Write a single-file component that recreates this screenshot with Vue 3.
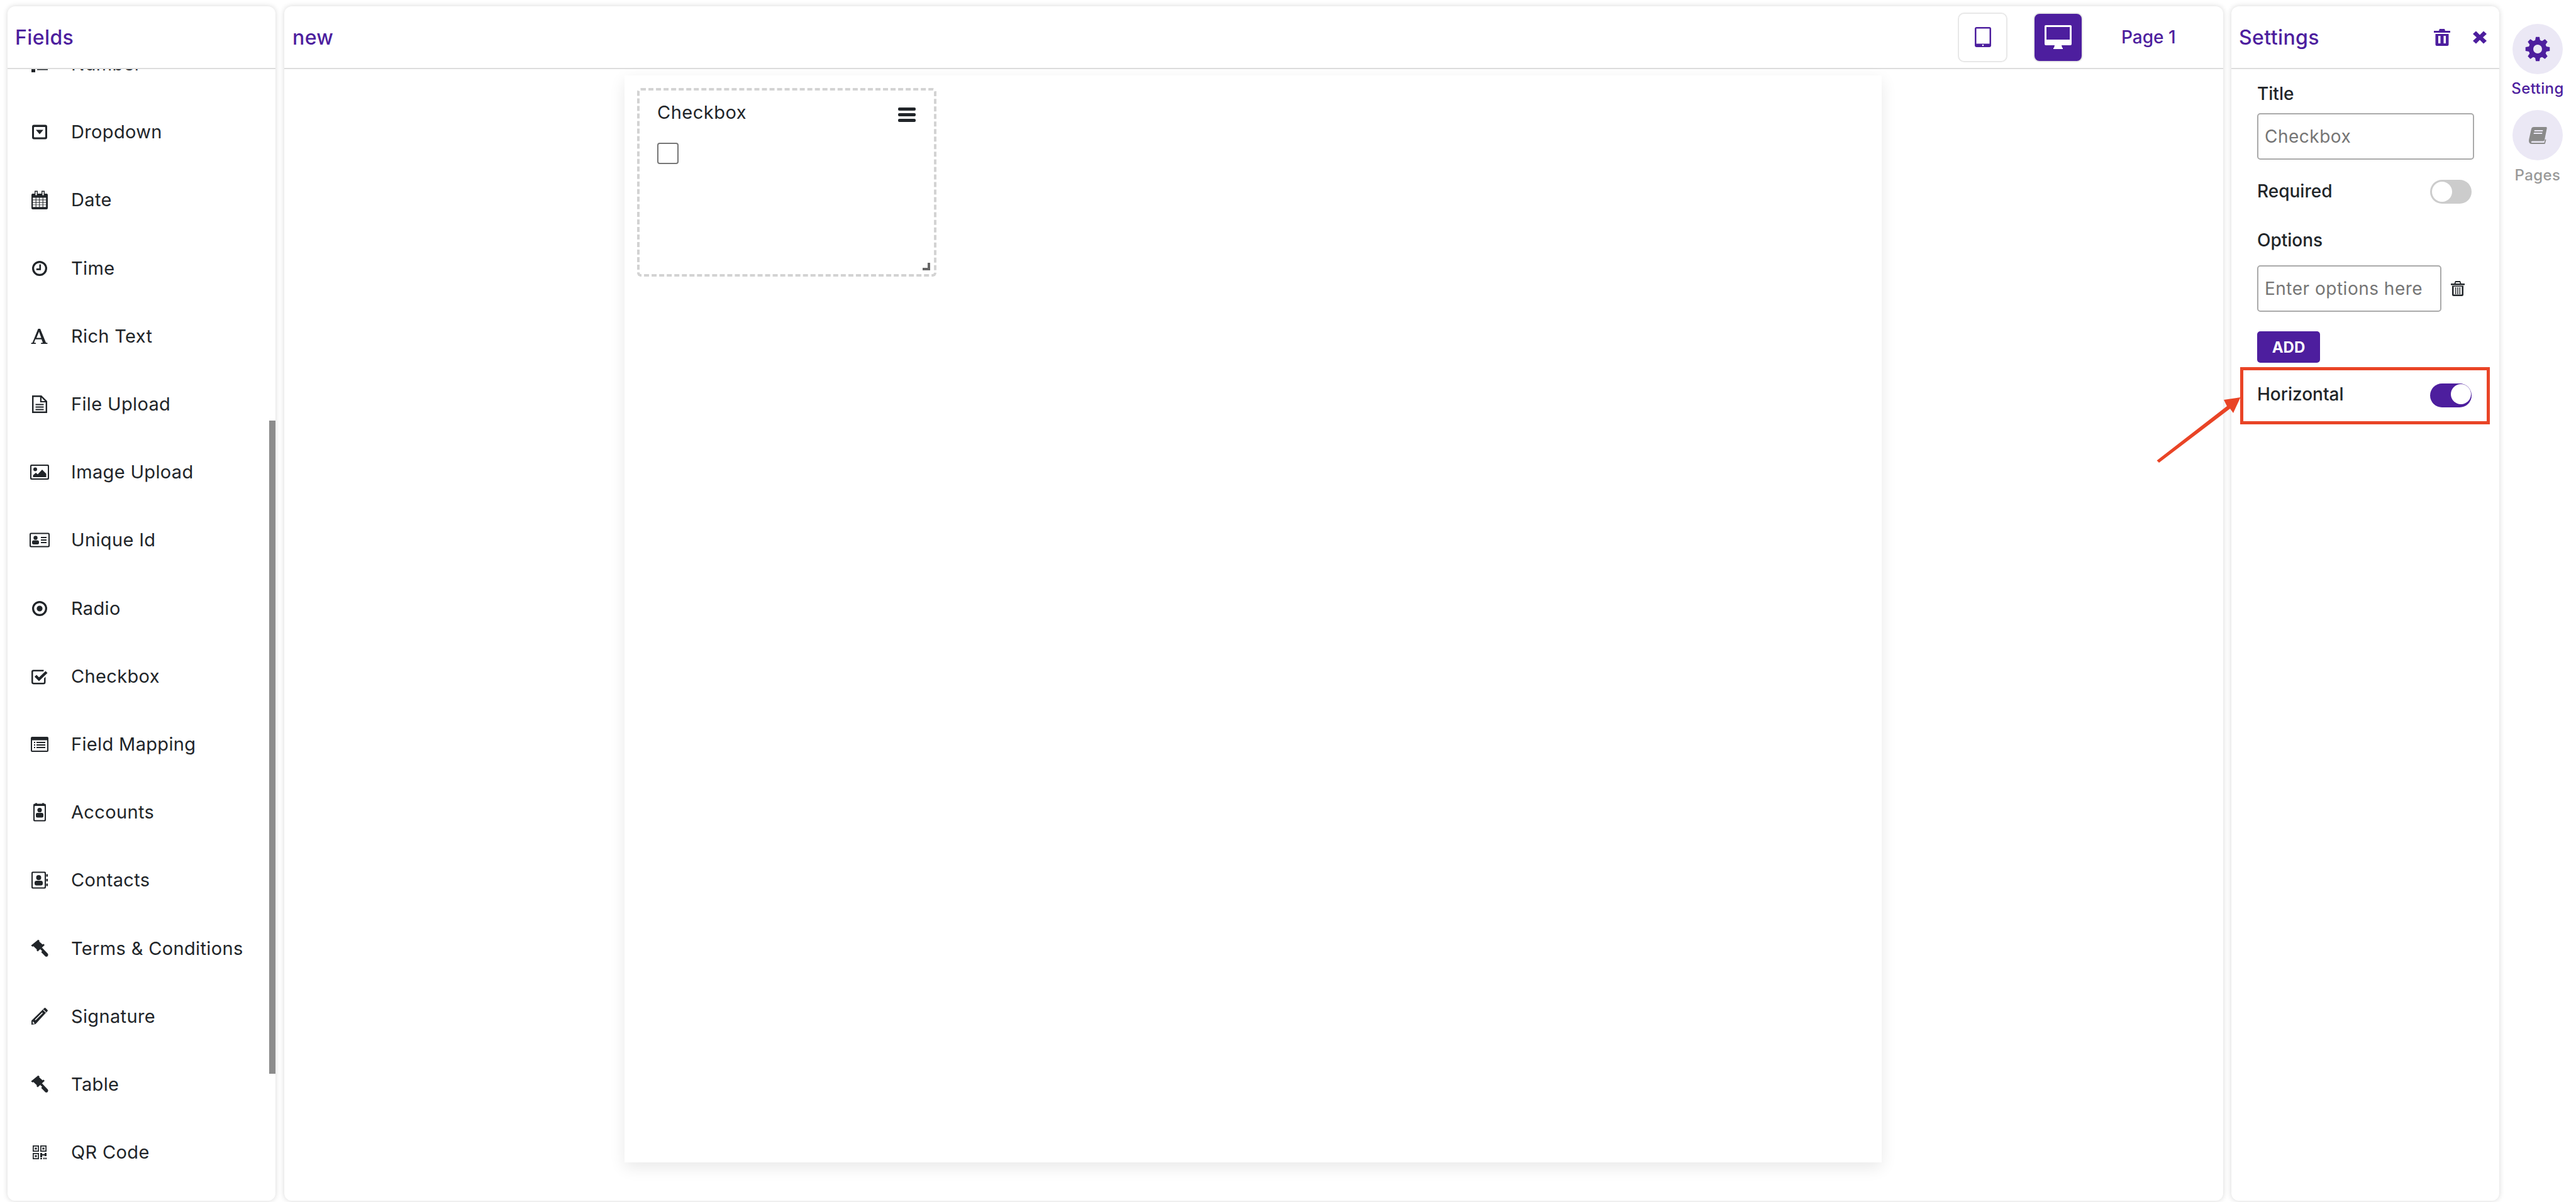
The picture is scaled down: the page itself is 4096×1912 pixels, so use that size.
<script setup>
const rect = (x, y, w, h) => `M${x} ${y}h${w}v${h}h${-w}z`
const rr = (x, y, w, h, r) =>
  `M${x + r} ${y}h${w - 2 * r}a${r} ${r} 0 0 1 ${r} ${r}v${h - 2 * r}a${r} ${r} 0 0 1 ${-r} ${r}h${-(w - 2 * r)}a${r} ${r} 0 0 1 ${-r} ${-r}v${-(h - 2 * r)}a${r} ${r} 0 0 1 ${r} ${-r}z`
const circ = (cx, cy, r) => `M${cx - r} ${cy}a${r} ${r} 0 1 0 ${2 * r} 0a${r} ${r} 0 1 0 ${-2 * r} 0z`

const gavel =
  'M13.7 1.7L16 3.5L15.2 4.6L20.8 9.5L22 8.3L24 10.3L13 20.5L11 18.5L11.8 17.4L6 12L5 13L2.3 11Z M19.7 14.3L29 24Q30.5 26 28.7 28Q26.7 29.7 24.8 28L18.5 21.5L20 19.7L17 16.9Z'

const calCells = []
for (let c = 0; c < 4; c++) for (let r = 0; r < 4; r++) calCells.push(rect(5.2 + c * 5.5, 12.6 + r * 3.9, 4.5, 3))
const calRing = x => rect(x, 1.5, 5, 4.5) + rect(x + 1.4, 3, 2.2, 3) + rect(x + 1.4, 6, 2.2, 2.5)

const qrBox = (x, y) => rect(x, y, 10, 10) + rect(x + 1.7, y + 1.7, 6.6, 6.6) + rect(x + 3.4, y + 3.4, 3.2, 3.2)

const fields = [
  { name: 'Number', d: rect(12, 6, 17, 3) + rect(12, 14.5, 17, 3) + rect(12, 22.5, 17, 3) + rect(4, 4, 3, 7) + rect(3, 14, 6, 3) + rect(3, 24, 6, 5) },
  { name: 'Dropdown', d: rr(4, 4.5, 24, 23, 3) + rr(7, 8, 18, 16.5, 1) + 'M10 12.5H22L16 19.5Z' },
  { name: 'Date', d: rr(3, 6, 26, 25, 2) + calCells.join('') + calRing(8) + calRing(19) },
  { name: 'Time', d: circ(16, 16, 12) + circ(16, 16, 8.8) + 'M15.5 9.5h2.6v9.2h-7.3v-2.6h4.7z' },
  { name: 'Rich Text', d: 'M2.5 28v-1.4l2.2-.5L13.6 4h3.4l9 22.1 2.5.5V28h-10.4v-1.4l3-.5-2-5.3h-10l-2 5.3 3 .5V28zM11 18.4h7.6L15 8.6z' },
  { name: 'File Upload', d: 'M4 2H19L28 11V30H4Z M6.4 4.4H16.8V13H25.6V27.6H6.4Z M19 5.5L24.5 11H19Z' + rect(9.5, 15.5, 13, 2) + rect(9.5, 19.5, 13, 2) + rect(9.5, 23.5, 13, 2) },
  { name: 'Image Upload', d: rr(1, 4, 30, 24, 2) + rr(3, 6, 26, 20, 1) + circ(9, 11.5, 3) + 'M5.5 24v-3l4.5-4 3 2.5 7-7.5 6.5 6.5V24z' },
  { name: 'Unique Id', d: rr(0, 4.5, 32, 23, 2.5) + rr(2, 6.5, 28, 19, 1) + circ(9.5, 12.5, 3.2) + rr(4, 16.5, 11, 6.5, 2.5) + rect(18, 11, 9, 2) + rect(18, 15, 9, 2) + rect(18, 19, 9, 2) },
  { name: 'Radio', d: circ(16, 16, 12) + circ(16, 16, 8.8) + circ(16, 16, 4.6) },
  { name: 'Checkbox', d: 'M6 5.5H22.5V8H6.5A1 1 0 0 0 5.5 9V25A1 1 0 0 0 6.5 26H22A1 1 0 0 0 23 25V19L25.5 16.5V25A3.5 3.5 0 0 1 22 28.5H6A3.5 3.5 0 0 1 3 25V8.5A3 3 0 0 1 6 5.5Z', s: 'M9.5 15L15 20.5L27 9' },
  { name: 'Field Mapping', d: rr(2, 4, 28, 24, 2) + rect(4, 9.5, 24, 16.5) + rect(7, 12, 2, 2) + rect(7, 16, 2, 2) + rect(7, 20, 2, 2) + rect(11, 12, 14, 2) + rect(11, 16, 14, 2) + rect(11, 20, 14, 2) },
  { name: 'Accounts', d: rr(6, 2.5, 20, 28, 2) + rr(8, 6, 16, 22.5, 1) + circ(16, 12.5, 3.6) + rr(10, 17, 12, 7.5, 2.5) + rect(9, 1.5, 3, 1) + rect(20, 1.5, 3, 1) },
  { name: 'Contacts', d: rr(3, 2.5, 23, 27, 2) + rr(5, 4.5, 19, 23, 1) + circ(14.5, 12, 4) + rr(8, 17, 13, 7.5, 3) + rect(26.5, 6.5, 2.5, 4) + rect(26.5, 14, 2.5, 4) + rect(26.5, 21.5, 2.5, 4) },
  { name: 'Terms & Conditions', d: gavel },
  { name: 'Signature', d: 'M3 29V22.5L21 5L23.5 2.5A1.5 1.5 0 0 1 25.5 2.5L28.5 5.5A1.5 1.5 0 0 1 28.5 7.5L26 10L9.5 28Z M5 27.2H8.5L5 23.5Z M8.5 21L20 9.5L21 10.5L9.5 22Z M21.5 5.8L25.5 9.8L26.4 9L22.4 5Z' },
  { name: 'Table', d: gavel },
  { name: 'QR Code', d: qrBox(5, 5) + qrBox(17, 5) + qrBox(5, 17) + rect(17, 17, 3, 7) + rect(20, 19, 4, 2) + rect(24, 17, 3, 5) + rect(17, 25, 3, 2) + rect(22, 24.5, 2, 2.5) + rect(25, 24.5, 2, 2.5) },
]

const gearPath = (() => {
  const pts = []
  const n = 8
  for (let i = 0; i < n; i++) {
    const a = (i / n) * Math.PI * 2 - Math.PI / 2
    const step = Math.PI / n
    const add = (r, t) => pts.push(`${(20 + r * Math.cos(t)).toFixed(2)} ${(20 + r * Math.sin(t)).toFixed(2)}`)
    add(14.5, a - step * 0.7)
    add(19.5, a - step * 0.38)
    add(19.5, a + step * 0.38)
    add(14.5, a + step * 0.7)
  }
  return 'M' + pts.join('L') + 'Z' + circ(20, 20, 7)
})()

const icons = {
  tablet: rr(0, 0, 26, 32, 3) + rect(2.5, 2.5, 21, 24) + circ(13, 29, 1.3),
  monitor: rr(0, 0, 43, 32, 2) + rect(3, 3, 37, 20) + 'M16 32H27L28 36H29V38H14V36H15Z',
  trash: 'M9 0h8l1 3h8v3H0V3h8z' + 'M2.5 8h21v16.5a2.5 2.5 0 0 1-2.5 2.5H5a2.5 2.5 0 0 1-2.5-2.5z' + rect(7, 11, 3.5, 12) + rect(15.5, 11, 3.5, 12),
  trashO: 'M7 0h8l1.5 4H22v2.5H0V4h5.5z M8 2h6l.6 2H7.4z M2 7.5h18v14a2.5 2.5 0 0 1-2.5 2.5h-13A2.5 2.5 0 0 1 2 21.5z M4.5 9v12.5h13V9z' + rect(7, 10, 1.4, 11) + rect(10.3, 10, 1.4, 11) + rect(13.6, 10, 1.4, 11),
  close: 'M5 0.5L11 6.5L17 0.5L22 5L16 10.5L22 16L17 20.5L11 14.5L5 20.5L0 16L6 10.5L0 5Z',
  book: 'M9 1H28.5Q30 1 29.7 3L26 21.5Q25.6 23.5 24 23.5H6.5Q4.5 23.5 4.6 25Q4.7 26 6.5 26H25.5L26.8 20.5L28.5 21L27 27Q26.7 28 25.5 28H6Q1 28 1 23Q1 21.5 1.6 19L5 4Q5.7 1 9 1Z M10 6H23.5L23 8H9.5Z M9 10H22.5L22 12H8.5Z',
}
</script>

<template>
  <div class="page">
    <aside class="panel fields">
      <header class="head"><h2 class="title">Fields</h2></header>
      <div class="list">
        <ul class="rows">
          <li v-for="f in fields" :key="f.name" class="row">
            <span class="slot">
              <svg width="32" height="32" viewBox="0 0 32 32">
                <path :d="f.d" fill="#212529" fill-rule="evenodd" />
                <template v-if="f.s">
                  <path :d="f.s" fill="none" stroke="#fff" stroke-width="8" />
                  <path :d="f.s" fill="none" stroke="#212529" stroke-width="4.4" />
                </template>
              </svg>
            </span>
            <span class="row-text">{{ f.name }}</span>
          </li>
        </ul>
        <div class="scrollbar"></div>
      </div>
    </aside>

    <main class="panel center">
      <header class="head center-head">
        <h2 class="title new">new</h2>
        <div class="device">
          <svg width="26" height="32" viewBox="0 0 26 32"><path :d="icons.tablet" fill="#4d1e9e" fill-rule="evenodd" /></svg>
        </div>
        <div class="device active">
          <svg width="43" height="38" viewBox="0 0 43 38"><path :d="icons.monitor" fill="#fff" fill-rule="evenodd" /></svg>
        </div>
        <span class="page-name">Page 1</span>
      </header>
      <section class="canvas">
        <div class="widget">
          <div class="widget-head">
            <span class="widget-title">Checkbox</span>
            <span class="burger"><i></i><i></i><i></i></span>
          </div>
          <div class="check"></div>
          <span class="resize"></span>
        </div>
      </section>
    </main>

    <aside class="panel settings">
      <header class="head settings-head">
        <h2 class="title">Settings</h2>
        <svg class="head-trash" width="26" height="27" viewBox="0 0 26 27"><path :d="icons.trash" fill="#4d1e9e" fill-rule="evenodd" /></svg>
        <svg width="22" height="21" viewBox="0 0 22 21"><path :d="icons.close" fill="#4d1e9e" /></svg>
      </header>
      <div class="form">
        <label class="label">Title</label>
        <input class="input" placeholder="Checkbox" />
        <div class="toggle-row first">
          <span class="label">Required</span>
          <span class="toggle"><i class="knob"></i></span>
        </div>
        <label class="label options">Options</label>
        <div class="option">
          <input class="input short" placeholder="Enter options here" />
          <svg width="22" height="24" viewBox="0 0 22 24"><path :d="icons.trashO" fill="#212529" fill-rule="evenodd" /></svg>
        </div>
        <button class="add">ADD</button>
        <div class="toggle-row second">
          <span class="label">Horizontal</span>
          <span class="toggle on"><i class="knob"></i></span>
        </div>
      </div>
      <div class="highlight"></div>
    </aside>

    <nav class="rail">
      <div class="rail-item">
        <span class="disc">
          <svg width="40" height="40" viewBox="0 0 40 40"><path :d="gearPath" fill="#4d1e9e" fill-rule="evenodd" /></svg>
        </span>
        <span class="rail-text sel">Setting</span>
      </div>
      <div class="rail-item">
        <span class="disc">
          <svg width="31" height="29" viewBox="0 0 31 29"><path :d="icons.book" fill="#8a8a8a" fill-rule="evenodd" /></svg>
        </span>
        <span class="rail-text">Pages</span>
      </div>
    </nav>

    <svg class="arrow" width="150" height="120" viewBox="0 0 150 120">
      <path d="M9.5 112.5L121 26L116 16L142.5 12L131 37L126 30L13 116Z" fill="#e94426" />
    </svg>
  </div>
</template>

<style scoped>
.page {
  position: relative;
  display: flex;
  box-sizing: border-box;
  width: 4096px;
  height: 1912px;
  padding: 10px 0 2px 12px;
  font-family: Inter, "Noto Sans", sans-serif;
  color: #212529;
  background: #fff;
  overflow: hidden;
}
.panel {
  position: relative;
  display: flex;
  flex-direction: column;
  box-sizing: border-box;
  background: #fff;
  border-radius: 12px;
  box-shadow: 0 0 9px rgba(0, 0, 0, 0.16);
}
.fields { width: 426px; margin-right: 14px; }
.center { width: 3083px; margin-right: 13px; }
.settings { width: 426px; }
.head {
  flex: none;
  display: flex;
  align-items: center;
  box-sizing: border-box;
  height: 100px;
  border-bottom: 2px solid #ddd;
}
.title {
  margin: 0;
  font-size: 32px;
  font-weight: 500;
  letter-spacing: 0.4px;
  color: #4d1e9e;
}
.fields .head { padding-left: 12px; }
.list {
  position: relative;
  flex: 1;
  overflow: hidden;
}
.rows {
  list-style: none;
  margin: -62px 0 0;
  padding: 0;
}
.row {
  display: flex;
  align-items: center;
  height: 108.2px;
}
.slot {
  display: flex;
  justify-content: center;
  width: 32px;
  margin: 0 34px 0 35px;
}
.slot svg { display: block; }
.row-text {
  font-size: 29px;
  letter-spacing: 0.35px;
  line-height: 40px;
}
.scrollbar {
  position: absolute;
  right: 0;
  top: 559px;
  width: 10px;
  height: 1039px;
  background: #8c8c8c;
}
.center-head { padding: 0 75px 0 13px; }
.new { flex: 1; }
.device {
  display: flex;
  align-items: center;
  justify-content: center;
  box-sizing: border-box;
  width: 79px;
  height: 79px;
  margin-right: 41px;
  border: 2px solid #e8e8e8;
  border-radius: 10px;
}
.device.active { background: #4d1e9e; margin-right: 61px; }
.page-name {
  width: 87px;
  font-size: 28px;
  font-weight: 500;
  white-space: nowrap;
  color: #4d1e9e;
}
.canvas {
  box-sizing: border-box;
  width: 1999px;
  height: 1729px;
  margin: 10px 0 0 541px;
  padding: 20px;
  background: #fff;
  box-shadow: 0 8px 24px rgba(0, 0, 0, 0.09);
}
.widget {
  position: relative;
  box-sizing: border-box;
  width: 476px;
  height: 300px;
  padding: 13px 28px 0 28px;
  border: 4px dashed #d3d3d3;
  border-radius: 6px;
}
.widget-head {
  display: flex;
  justify-content: space-between;
  align-items: center;
  height: 44px;
}
.widget-title {
  font-size: 29px;
  letter-spacing: 0.5px;
  margin-top: -2px;
}
.burger {
  display: flex;
  flex-direction: column;
  gap: 4px;
  width: 28px;
  margin: 7px 1px 0 0;
}
.burger i {
  display: block;
  height: 5px;
  border-radius: 2px;
  background: #212529;
}
.check {
  box-sizing: border-box;
  width: 34px;
  height: 34px;
  margin-top: 26px;
  border: 2px solid #767676;
  border-radius: 4px;
}
.resize {
  position: absolute;
  right: 6px;
  bottom: 6px;
  width: 12px;
  height: 12px;
  box-sizing: border-box;
  background: linear-gradient(#666, #666) right / 4px 100% no-repeat, linear-gradient(#666, #666) bottom / 100% 4px no-repeat;
}
.settings-head { padding: 0 20px 0 12px; }
.settings-head .title { flex: 1; }
.head-trash { margin-right: 36px; }
.form {
  display: flex;
  flex-direction: column;
  align-items: flex-start;
  padding: 18px 40px 0 41px;
}
.label {
  font-size: 28px;
  font-weight: 500;
  line-height: 42px;
}
.toggle-row .label { margin-top: -2px; }
.toggle-row.second .label { margin-top: -5px; }
.input {
  box-sizing: border-box;
  width: 345px;
  height: 74px;
  margin: 10px 0 0;
  padding: 0 10px;
  border: 2px solid #aaa;
  border-radius: 5px;
  background: #fff;
  font-family: Inter, "Noto Sans", sans-serif;
  font-size: 28px;
  letter-spacing: 0.5px;
  outline: none;
}
.input::placeholder { color: #757575; opacity: 1; }
.input.short { width: 293px; margin: 0; }
.toggle-row {
  display: flex;
  justify-content: space-between;
  align-items: center;
  box-sizing: border-box;
  width: 100%;
  height: 38px;
  padding-right: 4px;
}
.toggle-row.first { margin-top: 32px; }
.toggle-row.second { margin-top: 33px; }
.toggle {
  position: relative;
  flex: none;
  width: 66px;
  height: 38px;
  border-radius: 19px;
  background: #ccc;
}
.toggle.on { background: #4d1e9e; }
.knob {
  position: absolute;
  left: 3px;
  top: 3px;
  width: 32px;
  height: 32px;
  border-radius: 50%;
  background: #fff;
}
.toggle.on .knob { left: 33px; top: 1px; }
.options { margin-top: 37px; }
.option {
  display: flex;
  align-items: center;
  gap: 15px;
  margin-top: 19px;
}
.add {
  width: 100px;
  height: 50px;
  margin-top: 31px;
  padding: 0;
  border: 0;
  border-radius: 5px;
  background: #4d1e9e;
  color: #fff;
  font-family: Inter, "Noto Sans", sans-serif;
  font-size: 24px;
  font-weight: 700;
}
.highlight {
  position: absolute;
  left: 14px;
  top: 574px;
  box-sizing: border-box;
  width: 397px;
  height: 91px;
  border: 5px solid #e94426;
  pointer-events: none;
}
.rail {
  flex: 1;
  display: flex;
  flex-direction: column;
  align-items: center;
  gap: 18px;
  padding-top: 28px;
}
.rail-item {
  display: flex;
  flex-direction: column;
  align-items: center;
  width: 100%;
}
.disc {
  display: flex;
  align-items: center;
  justify-content: center;
  width: 80px;
  height: 80px;
  border-radius: 50%;
  background: #ebe8f5;
}
.rail-text {
  margin-top: 7px;
  font-size: 24px;
  line-height: 32px;
  letter-spacing: 0.4px;
  font-weight: 500;
  color: #999;
}
.rail-item + .rail-item .rail-text { margin-top: 8px; }
.rail-text.sel { color: #4d1e9e; }
.arrow {
  position: absolute;
  left: 3420px;
  top: 620px;
}
</style>

<style>
html, body { margin: 0; background: #fff; overflow: hidden; }
</style>
